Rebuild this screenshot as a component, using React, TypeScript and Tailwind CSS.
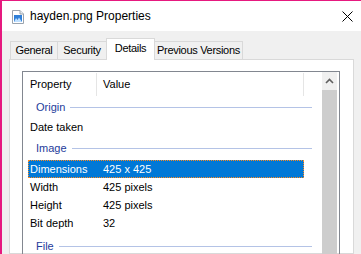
import React from "react";

const font = { fontFamily: '"Liberation Sans", Arial, sans-serif' };

const FileIcon = () => (
  <svg width="12" height="14" viewBox="0 0 12 14">
    <path d="M0.5 0.5H8L11.5 4V13.5H0.5Z" fill="#fff" stroke="#9aa3ad" />
    <path d="M8 0.5V4H11.5" fill="#e8ecf0" stroke="#9aa3ad" />
    <rect x="2" y="5" width="8" height="7" fill="#2f7fd8" />
    <path d="M2 12L4 8L5.5 10L7 7.5L10 12Z" fill="#bfe0ff" />
  </svg>
);

const CloseIcon = () => (
  <svg width="11" height="11" viewBox="0 0 11 11">
    <path d="M0.5 0.5L10.5 10.5M10.5 0.5L0.5 10.5" stroke="#000" strokeWidth="1" />
  </svg>
);

const Tab = ({ label, w, active, last }: { label: string; w: string; active?: boolean; last?: boolean }) => (
  <div
    className={`${w} flex items-center justify-center border-[#d9d9d9] ${
      active
        ? "h-[22px] border-x border-t bg-white relative z-10 -mb-px pb-[3px]"
        : last
          ? "h-[18px] border-t border-r bg-[#f0f0f0]"
          : "h-[18px] border-t border-l bg-[#f0f0f0]"
    }`}
  >
    <span className="text-[11px] text-black whitespace-nowrap tracking-[-0.3px]">{label}</span>
  </div>
);

const Group = ({ label, h }: { label: string; h: string }) => (
  <div className={`${h} flex items-center pl-[13px] pr-[10px]`}>
    <span className="text-[11px] text-[#1e3c9b] whitespace-nowrap">{label}</span>
    <div className="ml-[5px] flex-1 h-px bg-[#b4c3e6]" />
  </div>
);

const Row = ({ name, value, selected }: { name: string; value: string; selected?: boolean }) => (
  <div className="h-[18px] flex items-center">
    <div
      className={`flex items-center h-[18px] ml-[5px] w-[276px] ${
        selected ? "bg-[#0078d7] border border-dotted border-[#ff8a1e] text-white" : "text-black"
      }`}
    >
      <span className={`${selected ? "w-[74px] pl-[1px]" : "w-[75px] pl-[2px]"} text-[11px] whitespace-nowrap`}>
        {name}
      </span>
      <span className="text-[11px] whitespace-nowrap">{value}</span>
    </div>
  </div>
);

export default function App() {
  return (
    <div
      className="w-[361px] h-[254px] overflow-hidden border-l-2 border-t border-[#e6197f] bg-[#f0f0f0] flex flex-col"
      style={font}
    >
      <div className="h-[30px] bg-white flex items-center shrink-0">
        <div className="ml-[10px] mt-[2px]">
          <FileIcon />
        </div>
        <span className="ml-[6px] text-[12px] text-black whitespace-nowrap">hayden.png Properties</span>
        <div className="ml-auto mr-[8px]">
          <CloseIcon />
        </div>
      </div>

      <div className="px-[7px] pt-[7px] flex flex-col flex-1 min-h-0">
        <div className="flex items-end h-[21px] pl-px shrink-0">
          <Tab label="General" w="w-[47px]" />
          <Tab label="Security" w="w-[49px]" />
          <Tab label="Details" w="w-[49px]" active />
          <Tab label="Previous Versions" w="w-[88px]" last />
        </div>

        <div className="flex-1 min-h-0 bg-white border border-[#d9d9d9] pt-[11px] pl-[12px]">
          <div className="w-[318px] h-[200px] border border-[#828790] flex">
            <div className="flex-1 flex flex-col">
              <div className="h-[24px] flex items-center relative">
                <span className="pl-[7px] w-[73px] text-[11px] text-black">Property</span>
                <div className="absolute left-[73px] top-px h-[23px] w-px bg-[#e5e5e5]" />
                <span className="pl-[7px] text-[11px] text-black">Value</span>
                <div className="absolute left-[280px] top-px h-[23px] w-px bg-[#e5e5e5]" />
              </div>
              <Group label="Origin" h="h-[22px]" />
              <Row name="Date taken" value="" />
              <Group label="Image" h="h-[24px]" />
              <Row name="Dimensions" value="425 x 425" selected />
              <Row name="Width" value="425 pixels" />
              <Row name="Height" value="425 pixels" />
              <Row name="Bit depth" value="32" />
              <Group label="File" h="h-[28px]" />
            </div>
            <div className="w-[15px] mr-[2px] flex flex-col">
              <div className="h-[18px] bg-[#f0f0f0] flex items-center justify-center">
                <svg width="9" height="6" viewBox="0 0 9 6">
                  <path d="M1 5L4.5 1.5L8 5" stroke="#606060" strokeWidth="1.6" fill="none" />
                </svg>
              </div>
              <div className="flex-1 bg-[#cdcdcd]" />
            </div>
          </div>
        </div>
      </div>
    </div>
  );
}
